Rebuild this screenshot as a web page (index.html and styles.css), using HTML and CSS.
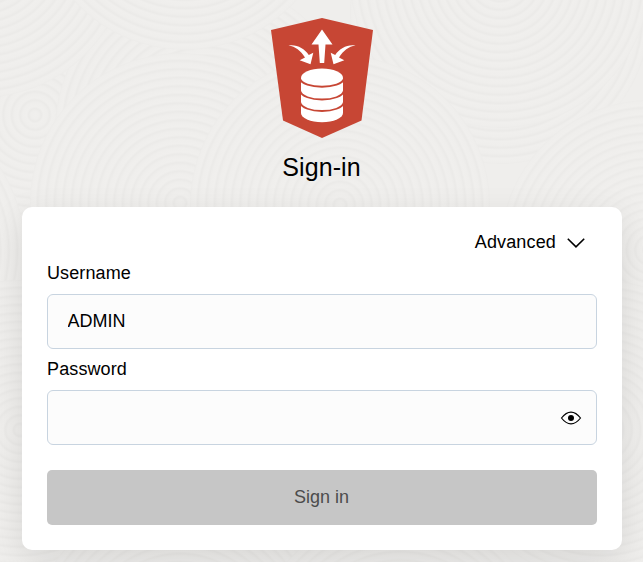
FILE: index.html
```html
<!DOCTYPE html>
<html lang="en">
<head>
<meta charset="utf-8">
<title>Sign-in</title>
<link rel="stylesheet" href="styles.css">
</head>
<body>
<svg class="backdrop" viewBox="0 0 643 562" preserveAspectRatio="xMidYMin slice" aria-hidden="true">
  <defs>
    <radialGradient id="rings" gradientUnits="userSpaceOnUse" cx="0" cy="0" r="8.5" spreadMethod="repeat">
      <stop offset="0" stop-color="#f0efed"/>
      <stop offset=".45" stop-color="#efeeec"/>
      <stop offset=".75" stop-color="#ebeae8"/>
      <stop offset="1" stop-color="#f0efed"/>
    </radialGradient>
    <circle id="disc" r="150" fill="url(#rings)"/>
  </defs>
  <use href="#disc" x="35" y="115"/>
  <use href="#disc" x="205" y="130"/>
  <use href="#disc" x="500" y="14"/>
  <use href="#disc" x="-20" y="-52"/>
  <use href="#disc" x="185" y="-100"/>
  <use href="#disc" x="500" y="-22"/>
  <use href="#disc" x="-125" y="250"/>
  <use href="#disc" x="20" y="430"/>
  <use href="#disc" x="180" y="203"/>
  <use href="#disc" x="340" y="205"/>
  <use href="#disc" x="650" y="250"/>
  <use href="#disc" x="600" y="430"/>
  <use href="#disc" x="180" y="645"/>
  <use href="#disc" x="400" y="660"/>
</svg>
<main class="login">
  <header class="brand">
    <svg class="logo" viewBox="0 0 102 120" aria-hidden="true">
      <path class="shield" d="M51 0 102 12 90.500 102.500 51 120 12 102.500 0 12Z"/>
      <path d="M51 11.500 61.500 26.500H54.500L53.200 45H48.800L47.500 26.500H40.500Z"/>
      <path id="inflow" d="M17.500 27.600C26 26.300 33 30.500 37.800 37L42.300 34.700 39.500 46.200 28.700 42.200 34 39.500C29.500 32.800 24.500 28.600 17.500 27.600Z"/>
      <use href="#inflow" transform="matrix(-1 0 0 1 102 0)"/>
      <path d="M30 60A21 9.500 0 0 1 72 60V95A21 9.200 0 0 1 30 95Z"/>
      <path class="bands" d="M29 60.500C31 71.500 71 71.500 73 60.500M29 72.500C31 84.500 71 84.500 73 72.500M29 84C31 96 71 96 73 84"/>
    </svg>
    <h1 class="title">Sign-in</h1>
  </header>
  <form class="card">
    <button class="advanced" type="button">
      <span>Advanced</span>
      <svg class="chevron" viewBox="0 0 18 10" aria-hidden="true"><path d="M.8.800 9 8.800 17.200.800"/></svg>
    </button>
    <label class="label" for="username">Username</label>
    <div class="field"><input class="input" id="username" type="text" value="ADMIN"></div>
    <label class="label label-next" for="password">Password</label>
    <div class="field">
      <input class="input" id="password" type="password">
      <svg class="eye" viewBox="0 0 22 14" aria-hidden="true">
        <path d="M1.500 7Q6 1.100 11 1.100T20.500 7Q16 12.900 11 12.900T1.500 7Z"/>
        <circle cx="11" cy="7" r="3"/>
      </svg>
    </div>
    <button class="submit" type="button" disabled>Sign in</button>
  </form>
</main>
</body>
</html>
```
FILE: styles.css
```css
* {
  box-sizing: border-box;
}

body {
  margin: 0;
  height: 562px;
  overflow: hidden;
  background: #efeeec;
  color: #000;
  font: 18px/20px "Liberation Sans", Arial, sans-serif;
}

.backdrop {
  position: absolute;
  inset: 0;
  z-index: -1;
  width: 100%;
  height: 100%;
}

.login {
  width: 600px;
  margin-left: 22px;
  padding-top: 18px;
}

.brand {
  display: flex;
  flex-direction: column;
  align-items: center;
}

.logo {
  width: 102px;
  height: 120px;
  fill: #fff;
}

.shield {
  fill: #c74634;
}

.bands {
  fill: none;
  stroke: #c74634;
  stroke-width: 1.8;
}

.title {
  margin: 14px 0 0;
  padding-right: 1px;
  font-size: 25px;
  font-weight: 400;
  line-height: 30px;
  letter-spacing: .1px;
}

.card {
  display: flex;
  flex-direction: column;
  height: 343px;
  margin-top: 25px;
  padding: 25px;
  border-radius: 10px;
  background: #fff;
  box-shadow: 0 12px 36px rgba(0, 0, 0, .1);
}

.advanced {
  display: flex;
  align-items: center;
  align-self: flex-end;
  gap: 11px;
  height: 20px;
  margin-right: 12px;
  padding: 0;
  border: 0;
  background: none;
  color: inherit;
  font: inherit;
  letter-spacing: .15px;
}

.chevron {
  width: 18px;
  height: 10px;
  margin-top: 2px;
  fill: none;
  stroke: #000;
  stroke-width: 1.6;
}

.label {
  height: 42px;
  padding-top: 11px;
  letter-spacing: .12px;
}

.label-next {
  height: 41px;
  padding-top: 10px;
}

.field {
  display: flex;
  align-items: center;
  height: 55px;
  padding: 0 14px 0 19.5px;
  border: 1px solid #c8d4e0;
  border-radius: 6px;
  background: #fcfcfc;
}

.input {
  flex: 1;
  min-width: 0;
  padding: 0 0 2px;
  border: 0;
  outline: 0;
  background: none;
  color: inherit;
  font: inherit;
}

.eye {
  width: 22px;
  height: 14px;
}

.eye path {
  fill: none;
  stroke: #000;
  stroke-width: 1.2;
}

.submit {
  height: 55px;
  margin-top: auto;
  padding: 0 1px 2px 0;
  border: 0;
  border-radius: 5px;
  background: #c6c6c6;
  color: #4c4c4c;
  font: inherit;
}
```
